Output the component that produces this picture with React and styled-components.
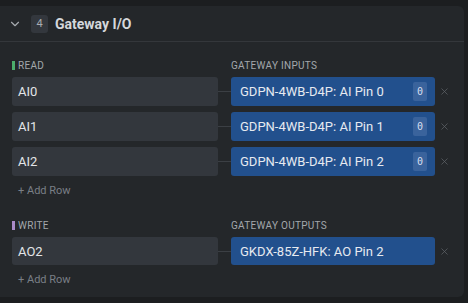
import React from "react";
import styled, { createGlobalStyle } from "styled-components";
import { ChevronDown, X } from "lucide-react";

const GlobalStyle = createGlobalStyle`
  html, body {
    margin: 0;
    padding: 0;
    background: #1c1e20;
    font-family: Roboto, "Noto Sans", "Liberation Sans", sans-serif;
  }
`;

const Page = styled.div`
  width: 468px;
  height: 303px;
  padding: 6px 4px 6px 0;
  box-sizing: border-box;
`;

const Panel = styled.div`
  height: 100%;
  background: #24272a;
  border-radius: 0 6px 6px 0;
  box-sizing: border-box;
`;

const Header = styled.div`
  display: flex;
  align-items: center;
  height: 36px;
  padding-left: 8px;
  border-bottom: 1px solid #34373b;
  box-sizing: border-box;
  color: #c9ccd0;
`;

const Chevron = styled.div`
  display: flex;
  width: 14px;
  color: #a6aaaf;
  margin-right: 9px;
`;

const StepBadge = styled.div`
  width: 17px;
  height: 18px;
  border-radius: 3px;
  background: #33373d;
  color: #a8acb1;
  font-size: 11px;
  display: flex;
  align-items: center;
  justify-content: center;
  margin-right: 7px;
`;

const Title = styled.div`
  font-size: 14px;
  font-weight: 700;
  color: #d4d7db;
`;

const Body = styled.div`
  padding: 17px 0 0 12px;
`;

const Section = styled.div`
  margin-bottom: ${(p) => (p.$last ? 0 : "21px")};
`;

const Labels = styled.div`
  display: grid;
  grid-template-columns: 206px 13px 204px;
  margin-bottom: 6px;
`;

const Label = styled.div`
  display: flex;
  align-items: center;
  height: 12px;
  font-size: 10px;
  letter-spacing: 0.3px;
  text-transform: uppercase;
  color: #a3a7ac;
  grid-column: ${(p) => p.$col};

  &::before {
    content: "";
    display: ${(p) => (p.$accent ? "block" : "none")};
    width: 3px;
    height: 9px;
    background: ${(p) => p.$accent};
    margin-right: 3px;
  }
`;

const Rows = styled.div`
  display: flex;
  flex-direction: column;
  gap: 6px;
`;

const Row = styled.div`
  display: grid;
  grid-template-columns: 206px 13px 204px 29px;
  height: ${(p) => p.$h || 29}px;
  align-items: center;
`;

const Field = styled.div`
  height: 100%;
  background: #33373d;
  border-radius: 3px;
  color: #e3e5e8;
  font-size: 13px;
  display: flex;
  align-items: center;
  padding-left: 6px;
`;

const Connector = styled.div`
  height: 1px;
  background: #3b3f44;
`;

const Mapped = styled.div`
  height: 100%;
  background: #22508d;
  border-radius: 3px;
  color: #e6eaf0;
  font-size: 13px;
  display: flex;
  align-items: center;
  justify-content: space-between;
  padding: 0 8px 0 9px;
`;

const Value = styled.span`
  width: 14px;
  height: 19px;
  border-radius: 2px;
  background: #3a639c;
  display: flex;
  align-items: center;
  justify-content: center;
  font-family: "DejaVu Sans Mono", monospace;
  font-size: 10px;
  color: #d7dff0;
`;

const Remove = styled.div`
  display: flex;
  justify-content: center;
  color: #5e6368;
  padding-right: 11px;
`;

const AddRow = styled.div`
  margin-top: 8px;
  padding-left: 6px;
  font-size: 11px;
  color: #7a7f87;
  line-height: 14px;
`;

const readRows = [
  { name: "AI0", target: "GDPN-4WB-D4P: AI Pin 0", value: "0" },
  { name: "AI1", target: "GDPN-4WB-D4P: AI Pin 1", value: "0" },
  { name: "AI2", target: "GDPN-4WB-D4P: AI Pin 2", value: "0" },
];

const writeRows = [{ name: "AO2", target: "GKDX-85Z-HFK: AO Pin 2" }];

function IoSection({ label, accent, target, rows, rowHeight, last }) {
  return (
    <Section $last={last}>
      <Labels>
        <Label $col={1} $accent={accent}>{label}</Label>
        <Label $col={3}>{target}</Label>
      </Labels>
      <Rows>
        {rows.map((r) => (
          <Row key={r.name} $h={rowHeight}>
            <Field>{r.name}</Field>
            <Connector />
            <Mapped>
              {r.target}
              {r.value && <Value>{r.value}</Value>}
            </Mapped>
            <Remove>
              <X size={11} strokeWidth={1.6} />
            </Remove>
          </Row>
        ))}
      </Rows>
      <AddRow>+ Add Row</AddRow>
    </Section>
  );
}

export default function App() {
  return (
    <Page>
      <GlobalStyle />
      <Panel>
        <Header>
          <Chevron>
            <ChevronDown size={14} strokeWidth={2} />
          </Chevron>
          <StepBadge>4</StepBadge>
          <Title>Gateway I/O</Title>
        </Header>
        <Body>
          <IoSection
            label="Read"
            accent="#4cae6d"
            target="Gateway Inputs"
            rows={readRows}
          />
          <IoSection
            label="Write"
            accent="#a98bc8"
            target="Gateway Outputs"
            rows={writeRows}
            rowHeight={28}
            last
          />
        </Body>
      </Panel>
    </Page>
  );
}
